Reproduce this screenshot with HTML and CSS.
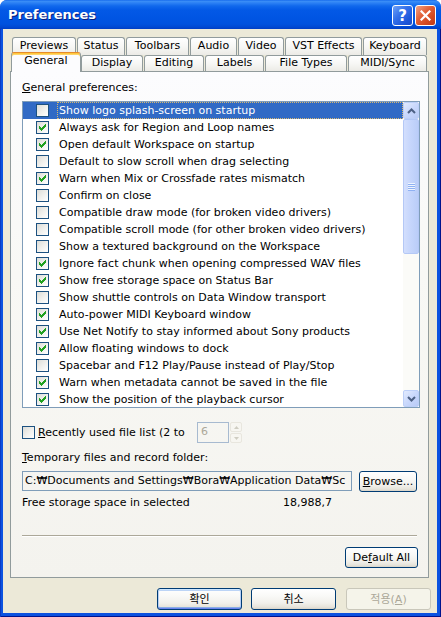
FILE: index.html
```html
<!DOCTYPE html>
<html>
<head>
<meta charset="utf-8">
<title>Preferences</title>
<link rel="stylesheet" href="styles.css">
</head>
<body>
<div class="window">
  <div class="titlebar">
    <span class="title">Preferences</span>
    <div class="caption-btns">
      <span class="cap-btn help">?</span>
      <span class="cap-btn close"><svg width="11" height="11" viewBox="0 0 11 11"><path d="M1.5 1.5L9.5 9.5M9.5 1.5L1.5 9.5" stroke="#fff" stroke-width="2.2" stroke-linecap="square"/></svg></span>
    </div>
  </div>
  <div class="frame">
    <div class="client">
      <div class="tabrow row1">
        <div class="tab w-previews">Previews</div>
        <div class="tab w-status">Status</div>
        <div class="tab w-toolbars">Toolbars</div>
        <div class="tab w-audio">Audio</div>
        <div class="tab w-video">Video</div>
        <div class="tab w-vst">VST Effects</div>
        <div class="tab w-keyboard">Keyboard</div>
      </div>
      <div class="tabrow row2">
        <div class="tab sel w-general">General</div>
        <div class="tab w-display"><span class="clip">Display</span></div>
        <div class="tab w-editing"><span class="clip">Editing</span></div>
        <div class="tab w-labels"><span class="clip">Labels</span></div>
        <div class="tab w-filetypes"><span class="clip">File Types</span></div>
        <div class="tab w-midi"><span class="clip">MIDI/Sync</span></div>
      </div>
      <div class="panel">
        <div class="caption"><u>G</u>eneral preferences:</div>
        <div class="list">
          <div class="rows">
            <div class="row sel"><span class="cb"></span><span class="lbl">Show logo splash-screen on startup</span></div>
            <div class="row"><span class="cb"><svg class="chk" width="11" height="11" viewBox="0 0 11 11"><path d="M8 2h1v1h-1zM7 3h2v1h-2zM2 4h1v1h-1zM6 4h3v1h-3zM2 5h2v1h-2zM5 5h3v1h-3zM2 6h5v1h-5zM3 7h3v1h-3zM4 8h1v1h-1z"/></svg></span><span class="lbl">Always ask for Region and Loop names</span></div>
            <div class="row"><span class="cb"><svg class="chk" width="11" height="11" viewBox="0 0 11 11"><path d="M8 2h1v1h-1zM7 3h2v1h-2zM2 4h1v1h-1zM6 4h3v1h-3zM2 5h2v1h-2zM5 5h3v1h-3zM2 6h5v1h-5zM3 7h3v1h-3zM4 8h1v1h-1z"/></svg></span><span class="lbl">Open default Workspace on startup</span></div>
            <div class="row"><span class="cb"></span><span class="lbl">Default to slow scroll when drag selecting</span></div>
            <div class="row"><span class="cb"><svg class="chk" width="11" height="11" viewBox="0 0 11 11"><path d="M8 2h1v1h-1zM7 3h2v1h-2zM2 4h1v1h-1zM6 4h3v1h-3zM2 5h2v1h-2zM5 5h3v1h-3zM2 6h5v1h-5zM3 7h3v1h-3zM4 8h1v1h-1z"/></svg></span><span class="lbl">Warn when Mix or Crossfade rates mismatch</span></div>
            <div class="row"><span class="cb"></span><span class="lbl">Confirm on close</span></div>
            <div class="row"><span class="cb"></span><span class="lbl">Compatible draw mode (for broken video drivers)</span></div>
            <div class="row"><span class="cb"></span><span class="lbl">Compatible scroll mode (for other broken video drivers)</span></div>
            <div class="row"><span class="cb"></span><span class="lbl">Show a textured background on the Workspace</span></div>
            <div class="row"><span class="cb"><svg class="chk" width="11" height="11" viewBox="0 0 11 11"><path d="M8 2h1v1h-1zM7 3h2v1h-2zM2 4h1v1h-1zM6 4h3v1h-3zM2 5h2v1h-2zM5 5h3v1h-3zM2 6h5v1h-5zM3 7h3v1h-3zM4 8h1v1h-1z"/></svg></span><span class="lbl">Ignore fact chunk when opening compressed WAV files</span></div>
            <div class="row"><span class="cb"><svg class="chk" width="11" height="11" viewBox="0 0 11 11"><path d="M8 2h1v1h-1zM7 3h2v1h-2zM2 4h1v1h-1zM6 4h3v1h-3zM2 5h2v1h-2zM5 5h3v1h-3zM2 6h5v1h-5zM3 7h3v1h-3zM4 8h1v1h-1z"/></svg></span><span class="lbl">Show free storage space on Status Bar</span></div>
            <div class="row"><span class="cb"></span><span class="lbl">Show shuttle controls on Data Window transport</span></div>
            <div class="row"><span class="cb"><svg class="chk" width="11" height="11" viewBox="0 0 11 11"><path d="M8 2h1v1h-1zM7 3h2v1h-2zM2 4h1v1h-1zM6 4h3v1h-3zM2 5h2v1h-2zM5 5h3v1h-3zM2 6h5v1h-5zM3 7h3v1h-3zM4 8h1v1h-1z"/></svg></span><span class="lbl">Auto-power MIDI Keyboard window</span></div>
            <div class="row"><span class="cb"><svg class="chk" width="11" height="11" viewBox="0 0 11 11"><path d="M8 2h1v1h-1zM7 3h2v1h-2zM2 4h1v1h-1zM6 4h3v1h-3zM2 5h2v1h-2zM5 5h3v1h-3zM2 6h5v1h-5zM3 7h3v1h-3zM4 8h1v1h-1z"/></svg></span><span class="lbl">Use Net Notify to stay informed about Sony products</span></div>
            <div class="row"><span class="cb"><svg class="chk" width="11" height="11" viewBox="0 0 11 11"><path d="M8 2h1v1h-1zM7 3h2v1h-2zM2 4h1v1h-1zM6 4h3v1h-3zM2 5h2v1h-2zM5 5h3v1h-3zM2 6h5v1h-5zM3 7h3v1h-3zM4 8h1v1h-1z"/></svg></span><span class="lbl">Allow floating windows to dock</span></div>
            <div class="row"><span class="cb"></span><span class="lbl">Spacebar and F12 Play/Pause instead of Play/Stop</span></div>
            <div class="row"><span class="cb"><svg class="chk" width="11" height="11" viewBox="0 0 11 11"><path d="M8 2h1v1h-1zM7 3h2v1h-2zM2 4h1v1h-1zM6 4h3v1h-3zM2 5h2v1h-2zM5 5h3v1h-3zM2 6h5v1h-5zM3 7h3v1h-3zM4 8h1v1h-1z"/></svg></span><span class="lbl">Warn when metadata cannot be saved in the file</span></div>
            <div class="row"><span class="cb"><svg class="chk" width="11" height="11" viewBox="0 0 11 11"><path d="M8 2h1v1h-1zM7 3h2v1h-2zM2 4h1v1h-1zM6 4h3v1h-3zM2 5h2v1h-2zM5 5h3v1h-3zM2 6h5v1h-5zM3 7h3v1h-3zM4 8h1v1h-1z"/></svg></span><span class="lbl">Show the position of the playback cursor</span></div>
          </div>
          <div class="vscroll">
            <div class="sb-btn"><svg width="9" height="6" viewBox="0 0 9 6"><path d="M1 5L4.5 1.5L8 5" fill="none" stroke="#4D6185" stroke-width="2"/></svg></div>
            <div class="sb-thumb"><span class="grip"></span></div>
            <div class="sb-track"></div>
            <div class="sb-btn"><svg width="9" height="6" viewBox="0 0 9 6"><path d="M1 1L4.5 4.5L8 1" fill="none" stroke="#4D6185" stroke-width="2"/></svg></div>
          </div>
        </div>
        <div class="recent">
          <span class="cb"></span>
          <span class="recent-lbl"><u>R</u>ecently used file list (2 to</span>
          <span class="spin-edit">6</span>
          <span class="spin">
            <span class="spin-btn"><svg width="5" height="3" viewBox="0 0 5 3"><path d="M0 3L2.5 0L5 3z" fill="#CFCDC2"/></svg></span>
            <span class="spin-btn"><svg width="5" height="3" viewBox="0 0 5 3"><path d="M0 0L2.5 3L5 0z" fill="#CFCDC2"/></svg></span>
          </span>
        </div>
        <div class="caption temp"><u>T</u>emporary files and record folder:</div>
        <div class="path-row">
          <span class="path-edit">C:₩Documents and Settings₩Bora₩Application Data₩Sc</span>
          <span class="btn browse"><span><u>B</u>rowse...</span></span>
        </div>
        <div class="free">
          <span class="free-lbl">Free storage space in selected</span>
          <span class="free-val">18,988,7</span>
        </div>
        <div class="separator"></div>
        <div class="btn default-all"><span>De<u>f</u>ault All</span></div>
      </div>
      <div class="dlg-btns">
        <span class="btn dlg default">확인</span>
        <span class="btn dlg">취소</span>
        <span class="btn dlg disabled">적용(<u>A</u>)</span>
      </div>
    </div>
  </div>
</div>
</body>
</html>
```

FILE: styles.css
```css
* { box-sizing: border-box; }
html, body { margin: 0; padding: 0; }
body {
  background: #ffffff;
  font-family: "DejaVu Sans", "Noto Sans CJK KR", sans-serif;
  font-size: 11px;
  color: #000;
}
u { text-decoration: underline; text-underline-offset: 1px; }

.window {
  width: 441px;
  height: 617px;
  display: flex;
  flex-direction: column;
  border-radius: 7px 7px 0 0;
  overflow: hidden;
  background: #0A4FDD;
}

/* Title bar */
.titlebar {
  height: 29px;
  flex: none;
  display: flex;
  align-items: flex-start;
  background: linear-gradient(to bottom,
    #0A5FE9 0px, #3D90F7 1px, #2B80F4 3px, #1068EC 6px, #0359E6 10px,
    #0055E3 18px, #0052DE 24px, #0049D3 27px, #003EC4 29px);
}
.title {
  margin: 7px 0 0 8px;
  font-weight: bold;
  font-size: 13px;
  line-height: 16px;
  color: #fff;
  text-shadow: 1px 1px 0 #0A1E7A;
}
.caption-btns {
  margin: 5px 5px 0 auto;
  display: flex;
  gap: 2px;
}
.cap-btn {
  width: 21px;
  height: 21px;
  border: 1px solid #fff;
  border-radius: 3px;
  display: flex;
  align-items: center;
  justify-content: center;
}
.help {
  background: linear-gradient(135deg, #6FA2F8 0%, #3471EA 40%, #1D56DA 75%, #1A4CC8 100%);
  color: #fff;
  font-weight: bold;
  font-size: 15px;
  line-height: 15px;
  padding-top: 1px;
}
.close {
  background: linear-gradient(135deg, #F3A284 0%, #E2623A 40%, #D44A21 70%, #C03A17 100%);
}

/* Frame */
.frame {
  flex: 1;
  display: flex;
  padding: 0 4px 4px 3px;
  background: #0B52E0;
  box-shadow: inset 1px 0 0 #0A3BC4, inset -1px 0 0 #00138C, inset 0 -1px 0 #00138C;
}
.client {
  flex: 1;
  background: #ECE9D8;
  display: flex;
  flex-direction: column;
}

/* Tabs */
.tabrow {
  display: flex;
  gap: 1px;
  flex: none;
}
.row1 { margin: 8px 0 0 9px; height: 18px; }
.row2 { margin: -3px 0 0 8px; height: 19px; }
.tab {
  height: 18px;
  border: 1px solid #919B9C;
  border-bottom: none;
  border-radius: 3px 3px 0 0;
  background: linear-gradient(to bottom, #FFFFFF 0%, #F7F7F5 50%, #ECEBE6 100%);
  text-align: center;
  line-height: 13px;
  padding-top: 1px;
  white-space: nowrap;
  overflow: hidden;
}
.row2 .tab { margin-top: 3px; height: 16px; padding-top: 0; }
.row2 .tab.sel {
  margin-top: 0;
  margin-right: -1px;
  height: 20px;
  position: relative;
  z-index: 2;
  background: #FCFCFE;
  border-top: 1px solid #E68B2C;
  box-shadow: inset 0 1px 0 #FFC83C, inset 0 2px 0 #FFD56B;
  padding-top: 2px;
  line-height: 11px;
}
.clip { display: block; height: 12px; overflow: hidden; }

.w-previews { width: 64px; }
.w-status { width: 48px; }
.w-toolbars { width: 63px; }
.w-audio { width: 47px; }
.w-video { width: 46px; }
.w-vst { width: 77px; }
.w-keyboard { width: 64px; }
.w-general { width: 70px; }
.w-display { width: 62px; }
.w-editing { width: 60px; }
.w-labels { width: 59px; }
.w-filetypes { width: 82px; }
.w-midi { width: 79px; }

/* Panel */
.panel {
  flex: none;
  margin-left: 7px;
  width: 419px;
  height: 507px;
  border: 1px solid #919B9C;
  background: linear-gradient(to bottom, #FCFCFE 0%, #F8F8F5 40%, #F4F3EE 100%);
  padding-left: 11px;
  display: flex;
  flex-direction: column;
}
.caption {
  margin-top: 9px;
  line-height: 13px;
  white-space: nowrap;
}
.caption.temp { margin-top: 8px; }

/* List */
.list {
  margin-top: 7px;
  width: 398px;
  height: 307px;
  border: 1px solid #7F9DB9;
  background: #fff;
  display: flex;
  overflow: hidden;
  flex: none;
}
.rows {
  width: 380px;
  overflow: hidden;
}
.row {
  height: 17px;
  display: flex;
  align-items: flex-start;
  padding-left: 13px;
}
.row .cb { margin-top: 2px; }
.lbl {
  margin-left: 8px;
  flex: 1;
  height: 17px;
  border: 1px solid transparent;
  padding-left: 1px;
  line-height: 15px;
  white-space: nowrap;
  overflow: hidden;
}
.row.sel { background: #316AC5; color: #fff; }
.row.sel .lbl { border: 1px dotted #D9B872; }

.cb {
  width: 13px;
  height: 13px;
  flex: none;
  border: 1px solid #1C5180;
  background: linear-gradient(135deg, #DCDCD7 0%, #F1F1EE 55%, #FFFFFF 100%);
  display: block;
}
.chk { display: block; fill: #21A121; shape-rendering: crispEdges; }

/* Scrollbar */
.vscroll {
  width: 16px;
  flex: none;
  display: flex;
  flex-direction: column;
  background: #FBFBF8;
}
.sb-btn {
  height: 17px;
  flex: none;
  border: 1px solid #BCCFF8;
  border-radius: 2px;
  background: linear-gradient(135deg, #E2EBFE 0%, #C9D8FC 50%, #B8CAF6 100%);
  display: flex;
  align-items: center;
  justify-content: center;
}
.sb-thumb {
  height: 135px;
  flex: none;
  border: 1px solid #B4C8F6;
  border-radius: 2px;
  background: linear-gradient(to right, #D3DFFD 0%, #C6D6FC 45%, #BACDF8 100%);
  display: flex;
  align-items: center;
  justify-content: center;
}
.grip {
  width: 7px;
  height: 8px;
  background: repeating-linear-gradient(to bottom, #EEF4FE 0 1px, #8FB1F3 1px 2px);
}
.sb-track { flex: 1; }

/* Recently used */
.recent {
  margin-top: 14px;
  height: 21px;
  display: flex;
  align-items: center;
  flex: none;
}
.recent-lbl {
  margin-left: 3px;
  width: 159px;
  line-height: 13px;
  white-space: nowrap;
  overflow: hidden;
}
.spin-edit {
  width: 32px;
  height: 21px;
  border: 1px solid #A7BAD0;
  color: #ACA899;
  padding-left: 3px;
  line-height: 18px;
}
.spin {
  margin-left: 1px;
  width: 12px;
  height: 21px;
  display: flex;
  flex-direction: column;
  gap: 1px;
}
.spin-btn {
  flex: 1;
  border: 1px solid #E8E6DE;
  border-radius: 2px;
  background: #F7F6F1;
  display: flex;
  align-items: center;
  justify-content: center;
}

/* Path row */
.path-row {
  margin-top: 7px;
  height: 21px;
  display: flex;
  align-items: flex-start;
  flex: none;
}
.path-edit {
  width: 330px;
  height: 20px;
  border: 1px solid #7F9DB9;
  padding-left: 2px;
  line-height: 18px;
  white-space: nowrap;
  overflow: hidden;
}

/* Buttons */
.btn {
  display: flex;
  align-items: center;
  justify-content: center;
  border: 1px solid #003C74;
  border-radius: 3px;
  background: linear-gradient(to bottom, #FFFFFF 0%, #F9F9F7 35%, #F1F0EB 70%, #E6E3DA 90%, #D8D3C8 100%);
  white-space: nowrap;
  line-height: 13px;
}
.browse {
  margin-left: 7px;
  width: 58px;
  height: 21px;
}
.default-all {
  margin-top: 10px;
  align-self: flex-end;
  margin-right: 10px;
  width: 73px;
  height: 21px;
}

.free {
  margin-top: 4px;
  display: flex;
  line-height: 13px;
  white-space: nowrap;
  flex: none;
}
.free-lbl { width: 261px; overflow: hidden; }

.separator {
  margin-top: 26px;
  width: 395px;
  height: 2px;
  border-top: 1px solid #ACA899;
  border-bottom: 1px solid #FFFFFF;
  flex: none;
}

.dlg-btns {
  margin: 10px 0 0 154px;
  display: flex;
  gap: 9px;
}
.dlg {
  width: 85px;
  height: 22px;
  font-size: 11px;
}
.dlg.default {
  box-shadow: inset 0 1px 0 #CEE7FF, inset 0 -1px 0 #6982EE, inset 1px 0 0 #B6CFF5, inset -1px 0 0 #B6CFF5,
              inset 0 2px 0 #BCD4F6, inset 0 -2px 0 #89ADE4;
}
.dlg.disabled {
  margin-left: 1px;
  border-color: #C9C7BA;
  background: #F5F4EA;
  color: #ACA899;
}
```
